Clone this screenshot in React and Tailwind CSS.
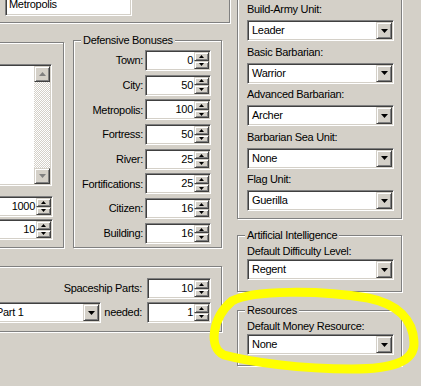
import React from "react";

const sunken =
  "border border-t-[#808080] border-l-[#808080] border-r-white border-b-white shadow-[inset_1px_1px_0_#404040,inset_-1px_-1px_0_#d4d0c8]";
const raised =
  "border border-t-[#d4d0c8] border-l-[#d4d0c8] border-r-[#404040] border-b-[#404040] shadow-[inset_1px_1px_0_#fff,inset_-1px_-1px_0_#808080] bg-[#d4d0c8]";
const etched = "border border-[#808080] shadow-[inset_1px_1px_0_#fff,1px_1px_0_#fff]";

function Arrow({ up, big, gray }) {
  const w = big ? 7 : 5;
  const h = big ? 4 : 3;
  const pts = up ? `0,${h} ${w},${h} ${w / 2},0` : `0,0 ${w},0 ${w / 2},${h}`;
  return (
    <svg width={w} height={h} viewBox={`0 0 ${w} ${h}`} className="block">
      <polygon points={pts} fill={gray ? "#808080" : "#000"} />
    </svg>
  );
}

function SpinBtn({ up }) {
  return (
    <div className={`flex-1 flex items-center justify-center ${raised}`}>
      <Arrow up={up} />
    </div>
  );
}

function Spin({ value, className = "" }) {
  return (
    <div className={`flex h-[21px] bg-white p-px ${sunken} ${className}`}>
      <div className="flex-1 text-right pr-px leading-[17px]">{value}</div>
      <div className="flex flex-col w-[15px]">
        <SpinBtn up />
        <SpinBtn />
      </div>
    </div>
  );
}

function Combo({ value, className = "" }) {
  return (
    <div className={`flex h-[21px] bg-white p-px ${sunken} ${className}`}>
      <div className="flex-1 pl-[3px] leading-[17px] overflow-hidden whitespace-nowrap">{value}</div>
      <div className={`w-[16px] flex items-center justify-center ${raised}`}>
        <Arrow big />
      </div>
    </div>
  );
}

function Group({ title, className = "", children }) {
  return (
    <div className={`relative ${etched} ${className}`}>
      {title && (
        <span className="absolute -top-[7px] left-[7px] px-[2px] bg-[#d4d0c8] leading-[13px] whitespace-nowrap">
          {title}
        </span>
      )}
      {children}
    </div>
  );
}

function Labeled({ label, value }) {
  return (
    <div className="flex items-center">
      <div className="w-[69px] text-right whitespace-nowrap">{label}</div>
      <Spin value={value} className="ml-[2px] w-[66px]" />
    </div>
  );
}

function UnitField({ label, value, first }) {
  return (
    <div className={first ? "" : "mt-[4.5px]"}>
      <div className="leading-[13px] whitespace-nowrap">{label}</div>
      <Combo value={value} className="mt-[4px]" />
    </div>
  );
}

export default function App() {
  const defensive = [
    ["Town:", "0"],
    ["City:", "50"],
    ["Metropolis:", "100"],
    ["Fortress:", "50"],
    ["River:", "25"],
    ["Fortifications:", "25"],
    ["Citizen:", "16"],
    ["Building:", "16"],
  ];
  const units = [
    ["Build-Army Unit:", "Leader"],
    ["Basic Barbarian:", "Warrior"],
    ["Advanced Barbarian:", "Archer"],
    ["Barbarian Sea Unit:", "None"],
    ["Flag Unit:", "Guerilla"],
  ];

  return (
    <div className="relative w-[421px] h-[386px] overflow-hidden bg-[#d4d0c8] text-black text-[11px] tracking-[-0.3px] font-['Liberation_Sans',Arial,sans-serif]">
      <div className="flex">
        {/* left column */}
        <div className="w-[230px] shrink-0">
          <Group className="-ml-[10px] -mt-[30px] h-[53px] pl-[14px] pt-[24px]">
            <div className={`w-[127px] h-[21px] bg-white pl-[3px] leading-[17px] ${sunken}`}>Metropolis</div>
          </Group>

          <div className="flex items-start mt-[17px]">
            <Group className="-ml-[10px] mt-[2px] w-[74px] h-[206px] pl-[4px] pr-[11px] pt-[21px]">
              <div className={`flex h-[122px] bg-white p-px ${sunken}`}>
                <div className="flex-1" />
                <div className="w-[16px] flex flex-col">
                  <div className={`h-[16px] flex items-center justify-center ${raised}`}>
                    <Arrow up big gray />
                  </div>
                  <div className="flex-1 bg-[repeating-conic-gradient(#d4d0c8_0_25%,#fff_0_50%)] bg-[length:2px_2px]" />
                  <div className={`h-[16px] flex items-center justify-center ${raised}`}>
                    <Arrow big gray />
                  </div>
                </div>
              </div>
              <Spin value="1000" className="mt-[10px] mr-[-1px]" />
              <Spin value="10" className="mt-[2px] mr-[-1px]" />
            </Group>

            <Group title="Defensive Bonuses" className="ml-[9px] w-[149px] h-[208px] pt-[9px]">
              <div className="flex flex-col gap-[3.7px]">
                {defensive.map(([l, v]) => (
                  <Labeled key={l} label={l} value={v} />
                ))}
              </div>
            </Group>
          </div>

          <Group className="-ml-[10px] mt-[18px] w-[232px] h-[66px] pt-[11px] pr-[10px]">
            <div className="flex items-center justify-end">
              <div className="whitespace-nowrap">Spaceship Parts:</div>
              <Spin value="10" className="ml-[5px] w-[64px]" />
            </div>
            <div className="flex items-center mt-[3px]">
              <Combo value="Part 1" className="w-[110px]" />
              <div className="flex-1 text-right pr-[5px] whitespace-nowrap">needed:</div>
              <Spin value="1" className="w-[64px]" />
            </div>
          </Group>
        </div>

        {/* right column */}
        <div className="w-[172px] shrink-0 ml-[7px]">
          <Group className="-mt-[10px] w-[165px] h-[229px] pt-[12px] pl-[9px] pr-[7px]">
            {units.map(([l, v], i) => (
              <UnitField key={l} label={l} value={v} first={i === 0} />
            ))}
          </Group>

          <Group title="Artificial Intelligence" className="mt-[16px] w-[165px] h-[57px] pt-[9px] pl-[9px] pr-[7px]">
            <div className="leading-[13px] whitespace-nowrap">Default Difficulty Level:</div>
            <Combo value="Regent" className="mt-[1px]" />
          </Group>

          <Group title="Resources" className="mt-[18px] w-[165px] h-[56px] pt-[9px] pl-[9px] pr-[7px]">
            <div className="leading-[13px] whitespace-nowrap">Default Money Resource:</div>
            <Combo value="None" className="mt-[1px]" />
          </Group>
        </div>
      </div>

      <svg className="absolute inset-0 pointer-events-none" width="421" height="386" viewBox="0 0 421 386">
        <path
          d="M232 301 C252 290 320 290 368 298 C398 304 413 320 414 342 C415 362 392 369 352 369 C300 369 250 362 224 355 C208 348 212 318 232 301 Z"
          fill="none"
          stroke="#ffff00"
          strokeWidth="9"
          strokeLinecap="round"
        />
      </svg>
    </div>
  );
}
